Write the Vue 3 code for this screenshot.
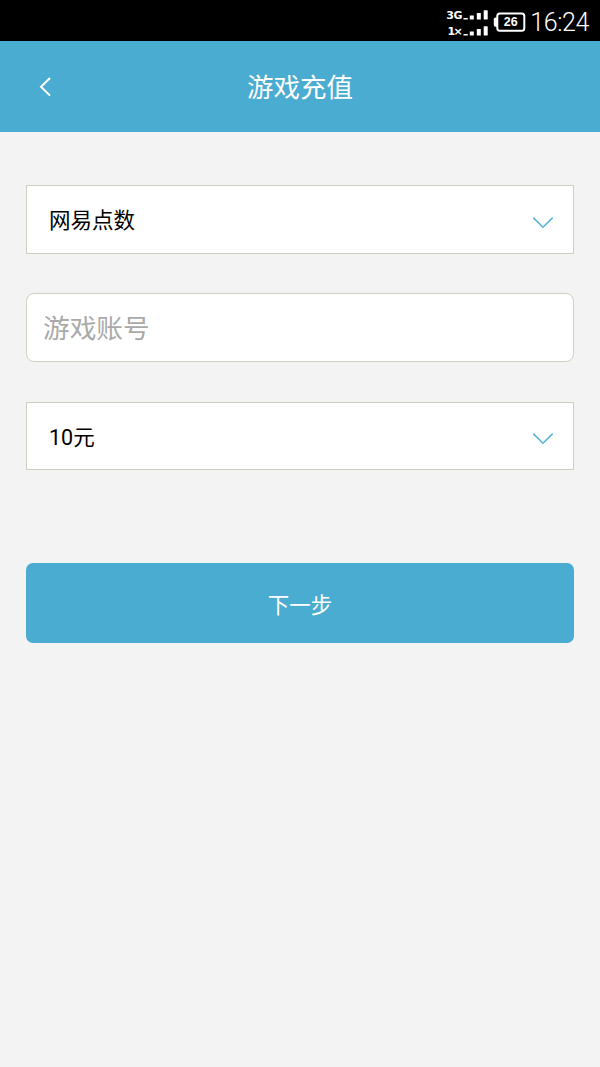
<template>
  <div class="page">
    <div class="status-bar">
      <div class="signals">
        <div v-for="net in networks" :key="net" class="signal">
          <span class="net">{{ net }}</span>
          <svg width="25" height="10" viewBox="0 0 25 10" fill="#fff">
            <rect x="0.5" y="8" width="4.3" height="1.5" />
            <rect x="6.8" y="5.5" width="4" height="4" />
            <rect x="13.8" y="3" width="4" height="6.5" />
            <rect x="20.7" y="0.3" width="4" height="9.2" />
          </svg>
        </div>
      </div>
      <div class="battery">
        <svg width="33" height="20" viewBox="0 0 33 20">
          <rect x="4.3" y="1.5" width="27" height="17.2" rx="2.5" fill="none" stroke="#fff" stroke-width="2" />
          <path d="M4 5.5H2.5Q.8 5.5 .8 7.3V13Q.8 14.8 2.5 14.8H4Z" fill="#fff" />
        </svg>
        <span class="level">26</span>
      </div>
      <span class="clock">16:24</span>
    </div>

    <header class="header">
      <button class="back" @click="goBack">
        <svg width="14" height="22" viewBox="0 0 14 22" fill="none" stroke="#fff" stroke-width="2">
          <path d="M12 2L3 10.8L12 19.6" />
        </svg>
      </button>
      <h1>游戏充值</h1>
    </header>

    <main class="form">
      <div class="select" @click="nextGame">
        <span>{{ games[gameIndex] }}</span>
        <svg class="arrow" width="22" height="14" viewBox="0 0 22 14">
          <path d="M1.3 1.6L11 11.3L20.7 1.6" />
        </svg>
      </div>
      <input v-model="account" class="account" type="text" placeholder="游戏账号">
      <div class="select amount" @click="nextAmount">
        <span>{{ amounts[amountIndex] }}</span>
        <svg class="arrow" width="22" height="14" viewBox="0 0 22 14">
          <path d="M1.3 1.6L11 11.3L20.7 1.6" />
        </svg>
      </div>
      <button class="next">下一步</button>
    </main>
  </div>
</template>

<script setup>
import { ref } from 'vue';

const networks = ['3G', '1×'];
const games = ['网易点数'];
const amounts = ['10元'];

const gameIndex = ref(0);
const amountIndex = ref(0);
const account = ref('');

function nextGame() {
  gameIndex.value = (gameIndex.value + 1) % games.length;
}

function nextAmount() {
  amountIndex.value = (amountIndex.value + 1) % amounts.length;
}

function goBack() {
  window.history.back();
}
</script>

<style>
body {
  margin: 0;
  background: #f3f3f3;
}
</style>

<style scoped>
.page {
  min-height: 1067px;
  background: #f3f3f3;
  font-family: Roboto, "Noto Sans CJK SC", sans-serif;
}

.status-bar {
  display: flex;
  justify-content: flex-end;
  box-sizing: border-box;
  height: 41px;
  padding-right: 11px;
  background: #000;
  color: #fff;
}

.signals {
  display: flex;
  flex-direction: column;
  gap: 6px;
  padding-top: 10px;
}

.signal {
  display: flex;
  justify-content: flex-end;
  height: 10px;
}

.net {
  margin-right: 1px;
  font-family: "DejaVu Sans", sans-serif;
  font-size: 11px;
  font-weight: bold;
  line-height: 11px;
  letter-spacing: -0.3px;
}

.signal:last-child .net {
  letter-spacing: -1.5px;
  margin-right: 2px;
}

.battery {
  display: grid;
  width: 33px;
  height: 20px;
  margin: 12px 4px 0 5px;
}

.battery > * {
  grid-area: 1 / 1;
}

.level {
  padding-left: 2px;
  font-family: "Liberation Sans", sans-serif;
  font-size: 12.5px;
  font-weight: bold;
  line-height: 21px;
  text-align: center;
}

.clock {
  font-size: 25px;
  font-weight: 300;
  line-height: 46px;
  letter-spacing: -0.4px;
}

.header {
  display: grid;
  grid-template-columns: 90px 1fr 90px;
  align-items: center;
  height: 91px;
  background: #49acd0;
  color: #fff;
}

.back {
  display: flex;
  padding: 0 0 0 38px;
  border: none;
  background: none;
  cursor: pointer;
}

h1 {
  margin: 0;
  padding-top: 2px;
  font-size: 26.5px;
  font-weight: 400;
  line-height: 40px;
  text-align: center;
}

.form {
  display: flex;
  flex-direction: column;
  padding: 53px 26px 0;
}

.select {
  display: flex;
  justify-content: space-between;
  align-items: center;
  box-sizing: border-box;
  height: 69px;
  padding: 0 19px 2px 22px;
  border: 1px solid #cfcfc0;
  background: #fff;
  color: #000;
  font-size: 21.5px;
  cursor: pointer;
}

.amount {
  height: 68px;
}

.arrow {
  margin-top: 8px;
  fill: none;
  stroke: #55b2d5;
  stroke-width: 1.5;
}

.account {
  box-sizing: border-box;
  width: 100%;
  height: 69px;
  margin: 39px 0 40px;
  padding: 2px 16px 0;
  border: 1px solid #cfcfc0;
  border-radius: 8px;
  outline: none;
  background: #fff;
  font-family: inherit;
  font-size: 26.7px;
}

.account::placeholder {
  color: #a9a9a9;
  opacity: 1;
}

.next {
  height: 80px;
  margin-top: 93px;
  border: none;
  border-radius: 7px;
  background: #49acd0;
  color: #fff;
  font-family: inherit;
  font-size: 21.5px;
  cursor: pointer;
}
</style>
